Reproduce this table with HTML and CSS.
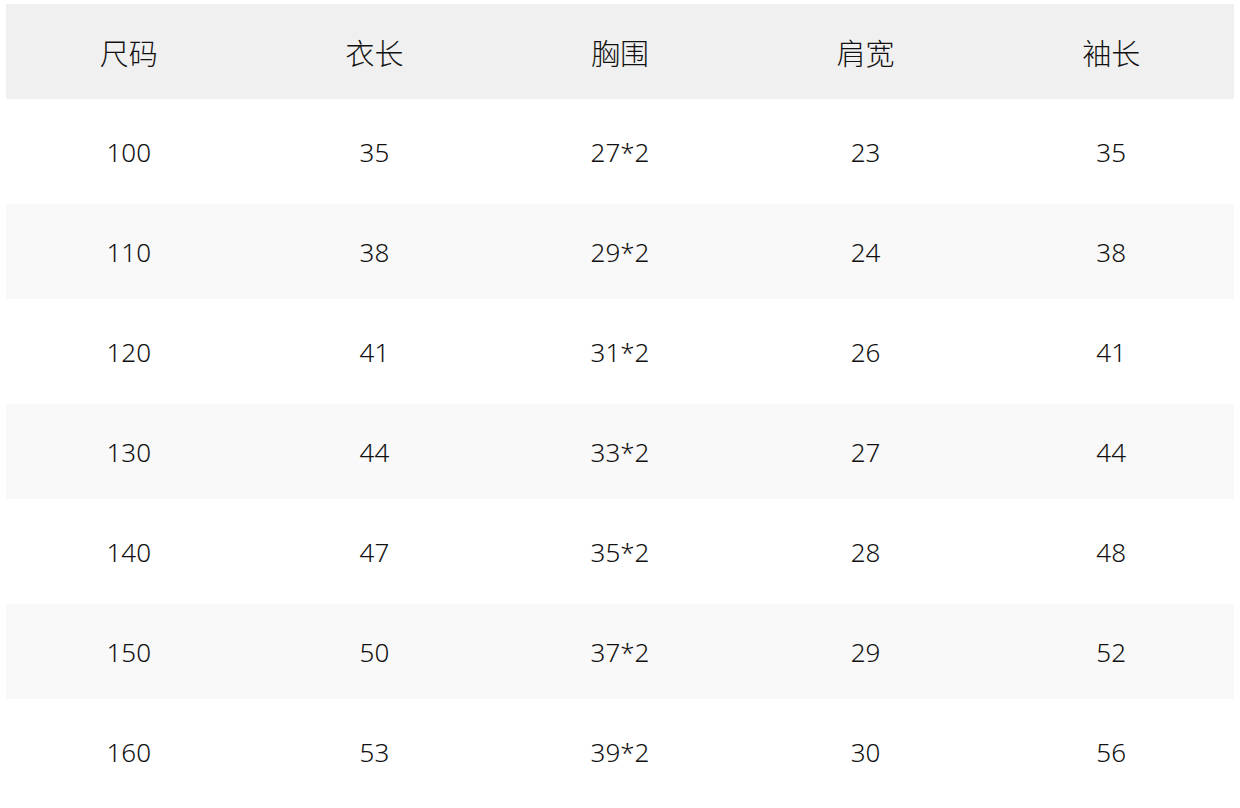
FILE: index.html
```html
<!DOCTYPE html>
<html lang="zh">
<head>
<meta charset="utf-8">
<link rel="stylesheet" href="styles.css">
</head>
<body>
<div class="table">
  <div class="row head"><div>尺码</div><div>衣长</div><div>胸围</div><div>肩宽</div><div>袖长</div></div>
  <div class="row"><div>100</div><div>35</div><div>27*2</div><div>23</div><div>35</div></div>
  <div class="row alt"><div>110</div><div>38</div><div>29*2</div><div>24</div><div>38</div></div>
  <div class="row"><div>120</div><div>41</div><div>31*2</div><div>26</div><div>41</div></div>
  <div class="row alt"><div>130</div><div>44</div><div>33*2</div><div>27</div><div>44</div></div>
  <div class="row"><div>140</div><div>47</div><div>35*2</div><div>28</div><div>48</div></div>
  <div class="row alt"><div>150</div><div>50</div><div>37*2</div><div>29</div><div>52</div></div>
  <div class="row"><div>160</div><div>53</div><div>39*2</div><div>30</div><div>56</div></div>
</div>
</body>
</html>
```
FILE: styles.css
```css
html, body {
  margin: 0;
  background: #ffffff;
}
.table {
  display: flex;
  flex-direction: column;
  gap: 5px;
  padding: 4px 6px;
  font-family: "Noto Sans", "Noto Sans CJK SC", sans-serif;
  font-size: 26px;
  font-weight: 300;
  color: #111111;
}
.row {
  display: grid;
  grid-template-columns: repeat(5, 1fr);
  height: 95px;
  align-items: center;
  text-align: center;
}
.row.head {
  background: #f0f0f0;
  font-size: 29px;
}
.row.alt {
  background: #f9f9f9;
}
```
